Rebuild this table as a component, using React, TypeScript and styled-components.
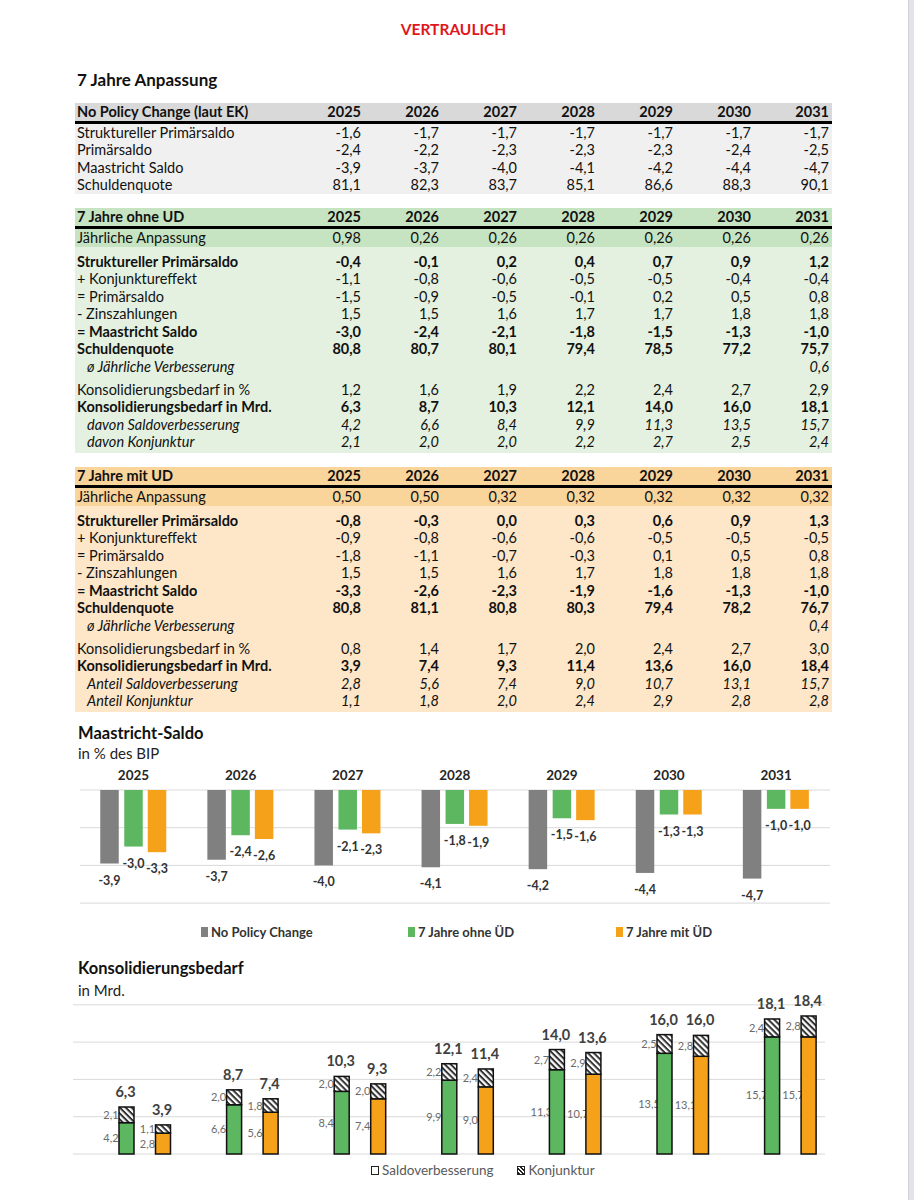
import styled, { createGlobalStyle } from "styled-components";

const YEARS = ["2025", "2026", "2027", "2028", "2029", "2030", "2031"];

type RowKind = "normal" | "bold" | "italic";
type RowData = { label: string; values: string[]; kind?: RowKind; indent?: boolean };
type Tone = "gray" | "green" | "orange";

const tones: Record<Tone, { head: string; band: string; body: string }> = {
  gray: { head: "#d9d9d9", band: "#f0f0f0", body: "#f0f0f0" },
  green: { head: "#c6e4c2", band: "#c6e4c2", body: "#e4f1e0" },
  orange: { head: "#f9d49b", band: "#f9d49b", body: "#fde7c8" },
};

const row = (label: string, v: string, kind: RowKind = "normal", indent = false): RowData => ({
  label,
  values: v.split(" "),
  kind,
  indent,
});

const noPolicy: RowData[] = [
  row("Struktureller Primärsaldo", "-1,6 -1,7 -1,7 -1,7 -1,7 -1,7 -1,7"),
  row("Primärsaldo", "-2,4 -2,2 -2,3 -2,3 -2,3 -2,4 -2,5"),
  row("Maastricht Saldo", "-3,9 -3,7 -4,0 -4,1 -4,2 -4,4 -4,7"),
  row("Schuldenquote", "81,1 82,3 83,7 85,1 86,6 88,3 90,1"),
];

const ohneUD = {
  band: row("Jährliche Anpassung", "0,98 0,26 0,26 0,26 0,26 0,26 0,26"),
  saldo: [
    row("Struktureller Primärsaldo", "-0,4 -0,1 0,2 0,4 0,7 0,9 1,2", "bold"),
    row("+ Konjunktureffekt", "-1,1 -0,8 -0,6 -0,5 -0,5 -0,4 -0,4"),
    row("= Primärsaldo", "-1,5 -0,9 -0,5 -0,1 0,2 0,5 0,8"),
    row("- Zinszahlungen", "1,5 1,5 1,6 1,7 1,7 1,8 1,8"),
    row("= Maastricht Saldo", "-3,0 -2,4 -2,1 -1,8 -1,5 -1,3 -1,0", "bold"),
    row("Schuldenquote", "80,8 80,7 80,1 79,4 78,5 77,2 75,7", "bold"),
    row("ø Jährliche Verbesserung", "- - - - - - 0,6", "italic", true),
  ],
  bedarf: [
    row("Konsolidierungsbedarf in %", "1,2 1,6 1,9 2,2 2,4 2,7 2,9"),
    row("Konsolidierungsbedarf in Mrd.", "6,3 8,7 10,3 12,1 14,0 16,0 18,1", "bold"),
    row("davon Saldoverbesserung", "4,2 6,6 8,4 9,9 11,3 13,5 15,7", "italic", true),
    row("davon Konjunktur", "2,1 2,0 2,0 2,2 2,7 2,5 2,4", "italic", true),
  ],
};

const mitUD = {
  band: row("Jährliche Anpassung", "0,50 0,50 0,32 0,32 0,32 0,32 0,32"),
  saldo: [
    row("Struktureller Primärsaldo", "-0,8 -0,3 0,0 0,3 0,6 0,9 1,3", "bold"),
    row("+ Konjunktureffekt", "-0,9 -0,8 -0,6 -0,6 -0,5 -0,5 -0,5"),
    row("= Primärsaldo", "-1,8 -1,1 -0,7 -0,3 0,1 0,5 0,8"),
    row("- Zinszahlungen", "1,5 1,5 1,6 1,7 1,8 1,8 1,8"),
    row("= Maastricht Saldo", "-3,3 -2,6 -2,3 -1,9 -1,6 -1,3 -1,0", "bold"),
    row("Schuldenquote", "80,8 81,1 80,8 80,3 79,4 78,2 76,7", "bold"),
    row("ø Jährliche Verbesserung", "- - - - - - 0,4", "italic", true),
  ],
  bedarf: [
    row("Konsolidierungsbedarf in %", "0,8 1,4 1,7 2,0 2,4 2,7 3,0"),
    row("Konsolidierungsbedarf in Mrd.", "3,9 7,4 9,3 11,4 13,6 16,0 18,4", "bold"),
    row("Anteil Saldoverbesserung", "2,8 5,6 7,4 9,0 10,7 13,1 15,7", "italic", true),
    row("Anteil Konjunktur", "1,1 1,8 2,0 2,4 2,9 2,8 2,8", "italic", true),
  ],
};

const maastricht = {
  gray: [-3.9, -3.7, -4.0, -4.1, -4.2, -4.4, -4.7],
  green: [-3.0, -2.4, -2.1, -1.8, -1.5, -1.3, -1.0],
  orange: [-3.3, -2.6, -2.3, -1.9, -1.6, -1.3, -1.0],
};

const bedarf = {
  green: { saldo: [4.2, 6.6, 8.4, 9.9, 11.3, 13.5, 15.7], konj: [2.1, 2.0, 2.0, 2.2, 2.7, 2.5, 2.4], total: [6.3, 8.7, 10.3, 12.1, 14.0, 16.0, 18.1] },
  orange: { saldo: [2.8, 5.6, 7.4, 9.0, 10.7, 13.1, 15.7], konj: [1.1, 1.8, 2.0, 2.4, 2.9, 2.8, 2.8], total: [3.9, 7.4, 9.3, 11.4, 13.6, 16.0, 18.4] },
};

const COLORS = { gray: "#808080", green: "#5db761", orange: "#f6a11a" };

const fmt = (v: number) => v.toFixed(1).replace(".", ",");

const GlobalStyle = createGlobalStyle`
  body {
    margin: 0;
    background: #fff;
    font-family: Lato, "Liberation Sans", sans-serif;
    color: #111;
  }
`;

const Page = styled.div`
  display: flex;
  min-height: 1200px;
`;

const Sheet = styled.main`
  width: 908px;
  box-sizing: border-box;
  padding: 20px 0 0 75px;
`;

const Gutter = styled.div`
  width: 6px;
  background: #e4e2ea;
  box-shadow: inset 1px 0 1px rgba(0, 0, 0, 0.08);
`;

const Confidential = styled.h1`
  margin: 0;
  width: 757px;
  text-align: center;
  color: #e0161d;
  font-size: 15.5px;
  font-weight: 700;
  line-height: 18px;
`;

const SectionTitle = styled.h2`
  margin: 32px 0 0;
  padding-left: 2px;
  font-size: 17px;
  font-weight: 700;
  line-height: 20px;
  height: 17px;
`;

const Table = styled.section<{ $tone: Tone; $gap: number; $padBottom?: number }>`
  width: 757px;
  margin-top: ${(p) => p.$gap}px;
  padding-bottom: ${(p) => p.$padBottom ?? 0}px;
  background: ${(p) => tones[p.$tone].body};
`;

const Row = styled.div<{ $kind?: RowKind; $bg?: string }>`
  display: grid;
  grid-template-columns: 1fr repeat(7, 78px);
  align-items: center;
  height: 17.5px;
  padding: 0 3px 0 2px;
  font-size: 14.5px;
  line-height: 17.5px;
  font-weight: ${(p) => (p.$kind === "bold" ? 700 : 400)};
  font-style: ${(p) => (p.$kind === "italic" ? "italic" : "normal")};
  background: ${(p) => p.$bg ?? "transparent"};
`;

const HeadRow = styled(Row)`
  height: 18px;
  line-height: 18px;
  font-weight: 700;
  border-bottom: 3px solid #000;
`;

const Label = styled.span<{ $indent?: boolean }>`
  padding-left: ${(p) => (p.$indent ? 10 : 0)}px;
  white-space: nowrap;
`;

const Value = styled.span`
  text-align: right;
`;

const Spacer = styled.div<{ $h: number }>`
  height: ${(p) => p.$h}px;
`;

const ChartTitle = styled.h3<{ $gap: number }>`
  margin: ${(p) => p.$gap}px 0 0;
  padding-left: 3px;
  font-size: 16.5px;
  font-weight: 700;
  line-height: 20px;
`;

const ChartUnit = styled.div<{ $lh: number }>`
  padding-left: 3px;
  font-size: 15px;
  line-height: ${(p) => p.$lh}px;
  color: #222;
`;

const ChartSvg = styled.svg`
  display: block;
  overflow: visible;
  font-family: Lato, "Liberation Sans", sans-serif;
`;

const Legend = styled.div<{ $gap: number; $left: number }>`
  display: flex;
  margin-top: ${(p) => p.$gap}px;
  padding-left: ${(p) => p.$left}px;
  line-height: 16px;
`;

const LegendItem = styled.span<{ $width?: number; $bold?: boolean }>`
  display: flex;
  align-items: center;
  gap: 3px;
  width: ${(p) => (p.$width ? `${p.$width}px` : "auto")};
  margin-right: ${(p) => (p.$width ? 0 : 24)}px;
  font-size: ${(p) => (p.$bold ? 13 : 13.5)}px;
  font-weight: ${(p) => (p.$bold ? 700 : 400)};
  color: ${(p) => (p.$bold ? "#333" : "#595959")};
`;

const BarSwatch = styled.i<{ $color: string }>`
  display: block;
  width: 7px;
  height: 10px;
  background: ${(p) => p.$color};
`;

const BoxSwatch = styled.i<{ $hatched?: boolean }>`
  display: block;
  width: 6px;
  height: 7px;
  border: 1.5px solid #222;
  background: ${(p) =>
    p.$hatched ? "repeating-linear-gradient(45deg, #222 0 1.5px, #fff 1.5px 3px)" : "#fff"};
`;

const TableRow = ({ r, bg }: { r: RowData; bg?: string }) => (
  <Row $kind={r.kind} $bg={bg}>
    <Label $indent={r.indent}>{r.label}</Label>
    {r.values.map((v, i) => (
      <Value key={i}>{v === "-" ? "" : v}</Value>
    ))}
  </Row>
);

const TableHead = ({ tone, title }: { tone: Tone; title: string }) => (
  <HeadRow $bg={tones[tone].head}>
    <Label>{title}</Label>
    {YEARS.map((y) => (
      <Value key={y}>{y}</Value>
    ))}
  </HeadRow>
);

const DataTable = ({ tone, gap, title, rows }: { tone: Tone; gap: number; title: string; rows: RowData[] }) => (
  <Table $tone={tone} $gap={gap}>
    <TableHead tone={tone} title={title} />
    {rows.map((r) => (
      <TableRow key={r.label} r={r} />
    ))}
  </Table>
);

const ScenarioTable = ({
  tone,
  title,
  data,
}: {
  tone: Tone;
  title: string;
  data: { band: RowData; saldo: RowData[]; bedarf: RowData[] };
}) => (
  <Table $tone={tone} $gap={14.5} $padBottom={2}>
    <TableHead tone={tone} title={title} />
    <TableRow r={data.band} bg={tones[tone].band} />
    <Spacer $h={6} />
    {data.saldo.map((r) => (
      <TableRow key={r.label} r={r} />
    ))}
    <Spacer $h={5.5} />
    {data.bedarf.map((r) => (
      <TableRow key={r.label} r={r} />
    ))}
  </Table>
);

const MaastrichtChart = () => {
  const zeroY = 26;
  const unit = 18.85;
  const barW = 18.5;
  const series: { key: keyof typeof maastricht; dx: number }[] = [
    { key: "gray", dx: -24 },
    { key: "green", dx: 0 },
    { key: "orange", dx: 23.5 },
  ];
  return (
    <ChartSvg width={760} height={151}>
      {[0, 1, 2, 3].map((k) => (
        <line key={k} x1={5} x2={755} y1={zeroY + k * 2 * unit} y2={zeroY + k * 2 * unit} stroke="#d9d9d9" strokeWidth={1} />
      ))}
      {YEARS.map((y, i) => {
        const cx = 58.5 + i * 107.1;
        return (
          <g key={y}>
            <text x={cx} y={16} textAnchor="middle" fontSize={13.5} fontWeight={700} fill="#262626">
              {y}
            </text>
            {series.map(({ key, dx }) => {
              const v = maastricht[key][i];
              const h = -v * unit;
              return (
                <g key={key}>
                  <rect x={cx + dx - barW / 2} y={zeroY} width={barW} height={h} fill={COLORS[key]} />
                  <text x={cx + dx} y={zeroY + h + 21} textAnchor="middle" fontSize={12.5} fontWeight={700} fill="#333">
                    {fmt(v)}
                  </text>
                </g>
              );
            })}
          </g>
        );
      })}
    </ChartSvg>
  );
};

const BedarfChart = () => {
  const zeroY = 152;
  const unit = 7.46;
  const barW = 15;
  const series = [
    { key: "green" as const, dx: 0 },
    { key: "orange" as const, dx: 36.5 },
  ];
  return (
    <ChartSvg width={760} height={160}>
      <defs>
        <pattern id="hatch" patternUnits="userSpaceOnUse" width={4.2} height={4.2} patternTransform="rotate(45)">
          <rect width={4.2} height={4.2} fill="#fff" />
          <rect width={4.2} height={2} fill="#333" />
        </pattern>
      </defs>
      {[0, 1, 2, 3, 4].map((k) => (
        <line key={k} x1={-2} x2={750} y1={zeroY - k * 5 * unit} y2={zeroY - k * 5 * unit} stroke="#d9d9d9" strokeWidth={1} />
      ))}
      {YEARS.map((y, i) =>
        series.map(({ key, dx }) => {
          const d = bedarf[key];
          const x = 44 + i * 107.6 + dx;
          const hs = d.saldo[i] * unit;
          const hk = d.konj[i] * unit;
          const top = zeroY - hs - hk;
          return (
            <g key={`${y}-${key}`}>
              <text x={x - 8} y={zeroY - hs / 2 + 4} textAnchor="middle" fontSize={11} fill="#6b6b6b">
                {fmt(d.saldo[i])}
              </text>
              <text x={x - 8} y={top + hk / 2 + 4} textAnchor="middle" fontSize={11} fill="#6b6b6b">
                {fmt(d.konj[i])}
              </text>
              <rect x={x} y={zeroY - hs} width={barW} height={hs} fill={COLORS[key]} stroke="#111" strokeWidth={1.5} />
              <rect x={x} y={top} width={barW} height={hk} fill="url(#hatch)" stroke="#111" strokeWidth={1.5} />
              <text x={x + barW / 2 - 1} y={top - 10} textAnchor="middle" fontSize={14.5} fontWeight={700} fill="#404040">
                {fmt(d.total[i])}
              </text>
            </g>
          );
        })
      )}
    </ChartSvg>
  );
};

const App = () => (
  <>
    <GlobalStyle />
    <Page>
      <Sheet>
        <Confidential>VERTRAULICH</Confidential>
        <SectionTitle>7 Jahre Anpassung</SectionTitle>
        <DataTable tone="gray" gap={15.5} title="No Policy Change (laut EK)" rows={noPolicy} />
        <ScenarioTable tone="green" title="7 Jahre ohne UD" data={ohneUD} />
        <ScenarioTable tone="orange" title="7 Jahre mit UD" data={mitUD} />

        <ChartTitle $gap={11.5}>Maastricht-Saldo</ChartTitle>
        <ChartUnit $lh={21}>in % des BIP</ChartUnit>
        <MaastrichtChart />
        <Legend $gap={9} $left={126}>
          <LegendItem $width={207} $bold>
            <BarSwatch $color={COLORS.gray} />
            No Policy Change
          </LegendItem>
          <LegendItem $width={208} $bold>
            <BarSwatch $color={COLORS.green} />
            7 Jahre ohne ÜD
          </LegendItem>
          <LegendItem $width={160} $bold>
            <BarSwatch $color={COLORS.orange} />
            7 Jahre mit ÜD
          </LegendItem>
        </Legend>

        <ChartTitle $gap={18}>Konsolidierungsbedarf</ChartTitle>
        <ChartUnit $lh={24}>in Mrd.</ChartUnit>
        <BedarfChart />
        <Legend $gap={0} $left={296}>
          <LegendItem>
            <BoxSwatch />
            Saldoverbesserung
          </LegendItem>
          <LegendItem>
            <BoxSwatch $hatched />
            Konjunktur
          </LegendItem>
        </Legend>
      </Sheet>
      <Gutter />
    </Page>
  </>
);

export default App;
